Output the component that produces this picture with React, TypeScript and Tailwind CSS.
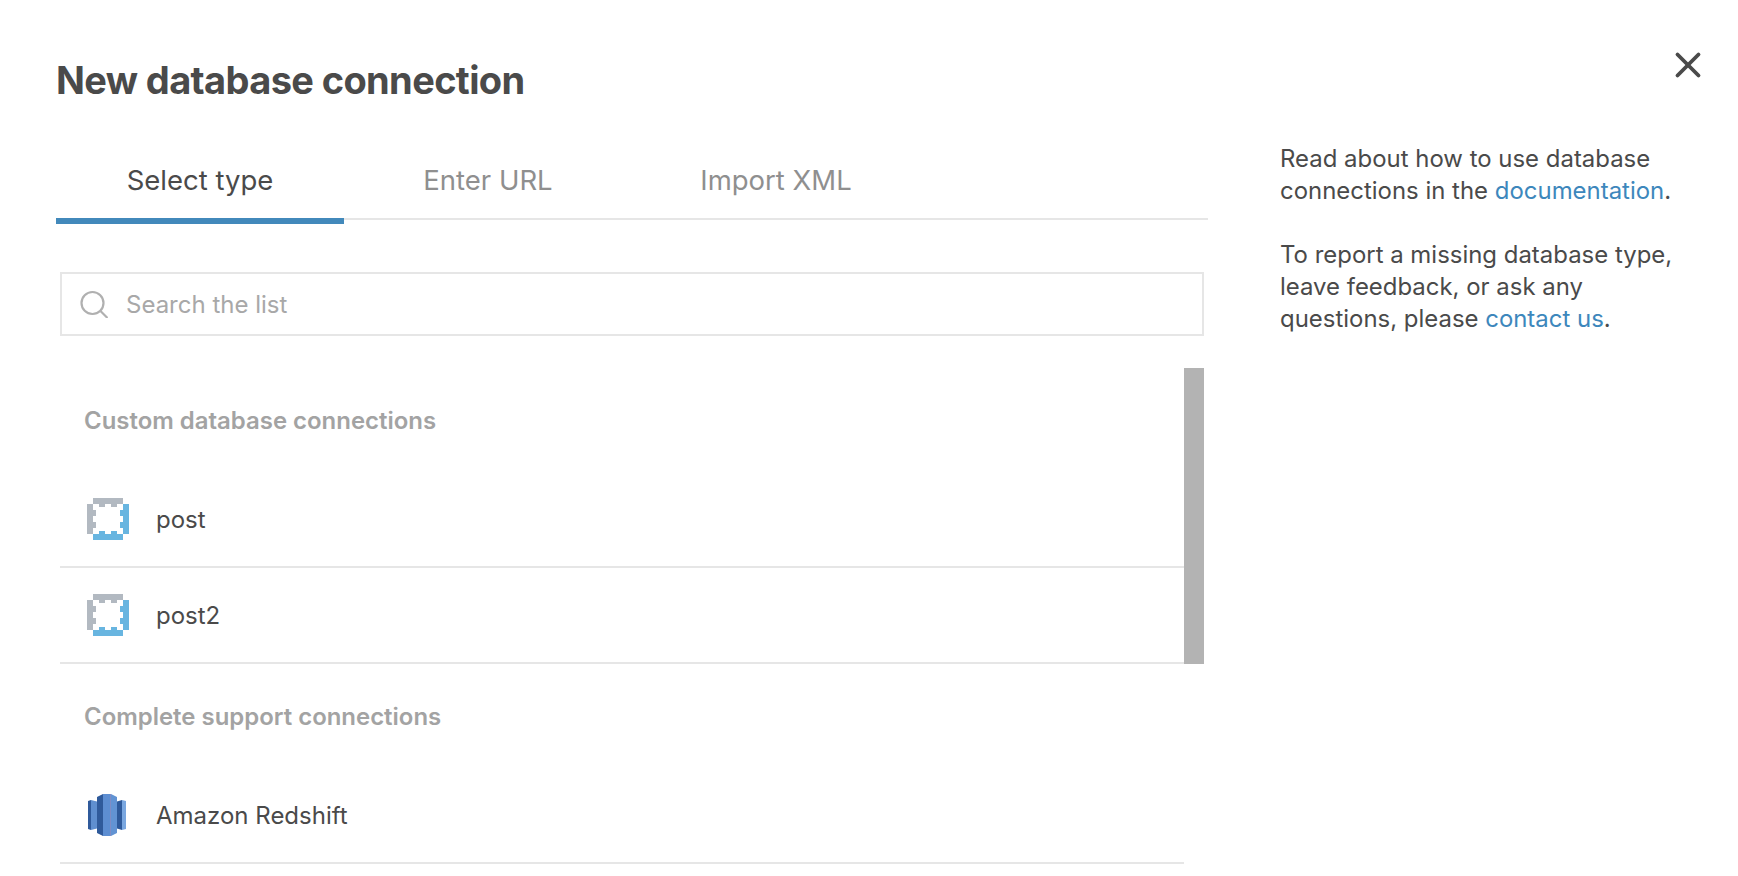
import React from "react";
import { X } from "lucide-react";

function CustomIcon() {
  return (
    <svg width="42" height="42" viewBox="0 0 42 42" className="shrink-0">
      <path
        fill="#b2b9c1"
        d="M6 0h30v6h-6v3h-6V6h-6v3h-6V6H6zM0 6h6v6h3v6H6v6h3v6H6v6H0z"
      />
      <path
        fill="#68b5e0"
        d="M36 6h6v30h-6v6H6v-6h6v-3h6v3h6v-3h6v3h6v-6h-3v-6h3v-6h-3v-6h3z"
      />
    </svg>
  );
}

function RedshiftIcon() {
  return (
    <svg width="42" height="42" viewBox="-1 0 42 42" className="shrink-0">
      <path fill="#2f5a9b" d="M0 7l3-1v30l-3-1z" />
      <path fill="#5f8fd0" d="M3 6l6 1.500v27l-6 1.500z" />
      <path fill="#2f5a9b" d="M9 3l6-3v42l-6-3z" />
      <path fill="#5d8ed2" d="M15 0h7v42h-7z" />
      <path fill="#7f8cc4" d="M22 0h1v42h-1z" />
      <path fill="#6293d3" d="M23 0l6 3v36l-6 3z" />
      <path fill="#2f5a9b" d="M29 7.500l5-1.500v30l-5-1.500z" />
      <path fill="#7aa7e0" d="M34 6l4 1v28l-4 1z" />
    </svg>
  );
}

function Row({ icon, label }: { icon: React.ReactNode; label: string }) {
  return (
    <div className="flex h-[96px] items-center gap-[27px] border-b-2 border-[#e6e6e6] pl-[27px] text-[24px] text-[#4a4a4a]">
      {icon}
      <span className="pt-[1px]">{label}</span>
    </div>
  );
}

export default function App() {
  return (
    <div className="relative flex h-screen w-full overflow-hidden bg-white font-['Inter',sans-serif]">
      {/* Left column */}
      <div className="ml-[56px] w-[1152px] shrink-0">
        <h1 className="pt-[56px] text-[38px] leading-[48px] font-bold tracking-[-0.63px] text-[#4a4a4a]">
          New database connection
        </h1>

        {/* Tabs */}
        <div className="mt-[38px] flex h-[78px] border-b-2 border-[#e6e6e6] text-[27.5px]">
          <div className="relative flex w-[288px] items-center justify-center pt-[2px] text-[#4a4a4a]">
            Select type
            <div className="absolute inset-x-0 -bottom-[6px] h-[6px] bg-[#4289bb]" />
          </div>
          <div className="flex w-[288px] items-center justify-center pt-[2px] text-[#8f8f8f]">
            Enter URL
          </div>
          <div className="flex w-[288px] items-center justify-center pt-[2px] text-[#8f8f8f]">
            Import XML
          </div>
        </div>

        <div className="ml-[4px] w-[1144px]">
          {/* Search */}
          <div className="mt-[52px] flex h-[64px] items-center gap-[18px] border-2 border-[#e6e6e6] pl-[18px] text-[24px] text-[#a8a8a8]">
            <svg width="28" height="28" viewBox="0 0 28 28" fill="none" stroke="#b0b0b0" strokeWidth="2.200" className="shrink-0">
              <circle cx="12.500" cy="13" r="11" />
              <path d="M20.500 21l7 7" />
            </svg>
            <span className="pt-[2px]">Search the list</span>
          </div>

          {/* List */}
          <div className="relative mt-[32px] pr-[20px]">
            <div className="flex h-[104px] items-center pt-[2px] pl-[24px] text-[23.950px] font-semibold text-[#a3a3a3]">
              Custom database connections
            </div>
            <Row icon={<CustomIcon />} label="post" />
            <Row icon={<CustomIcon />} label="post2" />
            <div className="flex h-[104px] items-center pt-[2px] pl-[24px] text-[23.950px] font-semibold text-[#a3a3a3]">
              Complete support connections
            </div>
            <Row icon={<RedshiftIcon />} label="Amazon Redshift" />
            <div className="absolute top-0 right-0 h-[296px] w-[20px] bg-[#b3b3b3]" />
          </div>
        </div>
      </div>

      {/* Right column */}
      <div className="ml-[72px] pt-[143px] text-[23.950px] leading-[32px] text-[#4a4a4a]">
        <p>
          Read about how to use database
          <br />
          connections in the <a className="text-[#3d87bc]">documentation</a>.
        </p>
        <p className="mt-[32px]">
          To report a missing database type,
          <br />
          leave feedback, or ask any
          <br />
          questions, please <a className="text-[#3d87bc]">contact us</a>.
        </p>
      </div>

      <button className="absolute top-[44px] left-[1667px] text-[#4a4a4a]">
        <X size={42} strokeWidth={2.2} />
      </button>
    </div>
  );
}
